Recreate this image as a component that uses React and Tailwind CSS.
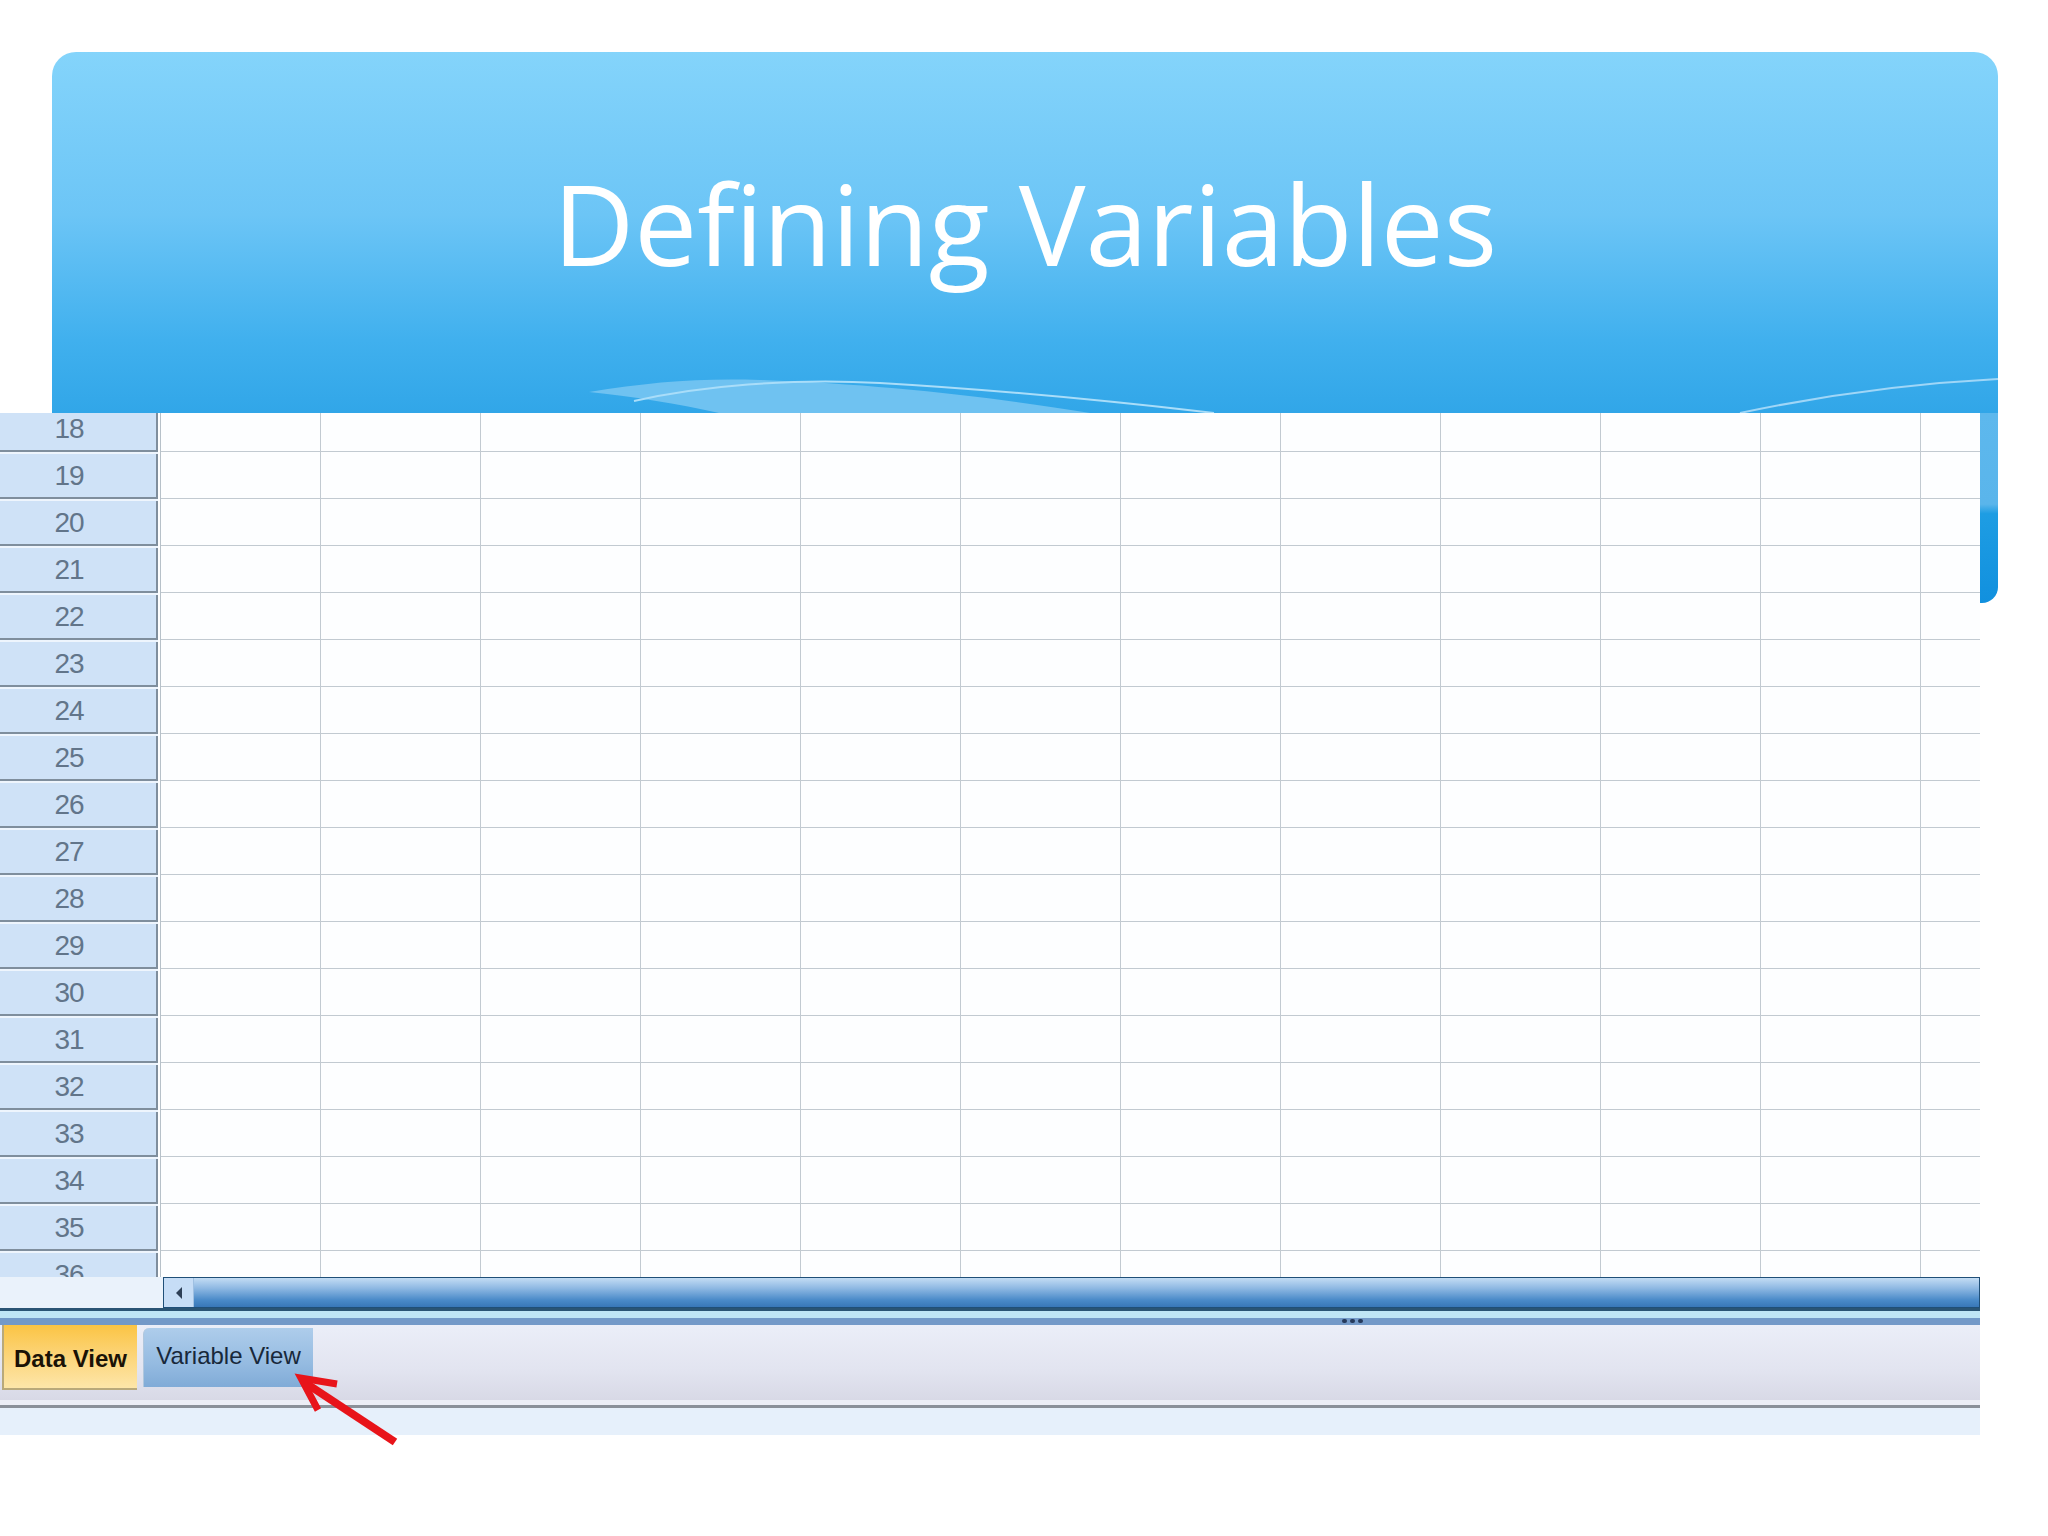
import React from "react";

const rows = Array.from({ length: 19 }, (_, i) => 18 + i);
const cols = Array.from({ length: 12 }, (_, i) => i);

function GridRow({ n }) {
  return (
    <div className="flex h-[47px] shrink-0">
      <div className="w-[160px] shrink-0 flex">
        <div className="w-[158px] h-full flex flex-col">
          <div className="h-[2px] bg-[#eef5fd]" />
          <div className="flex-1 bg-[#cfe2f7] border-r-2 border-b-2 border-[#7f8e9d] flex items-center justify-center pr-[18px]">
            <span className="text-[28px] leading-none text-[#62758a] font-['Liberation_Sans',Arial,sans-serif] tracking-[-1px]">
              {n}
            </span>
          </div>
        </div>
      </div>
      <div className="flex-1 flex overflow-hidden border-l border-[#b7c1c9] bg-[#fdfeff]">
        {cols.map((c) => (
          <div key={c} className="w-[160px] shrink-0 h-full border-r border-b border-[#c2cad1]" />
        ))}
      </div>
    </div>
  );
}

export default function App() {
  return (
    <div className="relative w-[2048px] h-[1536px] bg-white overflow-hidden">
      {/* banner */}
      <div className="relative ml-[52px] mt-[52px] w-[1946px] h-[361px] rounded-t-[24px] bg-[linear-gradient(180deg,#84d4fb_0%,#6cc5f6_45%,#40b0ee_80%,#31a6e8_100%)]">
        <h1 className="pt-[115px] text-center text-white text-[112px] leading-[112px] font-['Open_Sans','Noto_Sans',sans-serif] font-normal">
          Defining Variables
        </h1>
        <svg className="absolute left-0 top-0" width="1946" height="361" viewBox="52 52 1946 361">
          <path d="M589 392 C 650 382, 700 378, 760 380 C 880 384, 1000 398, 1090 413 L 719 413 C 680 404, 630 396, 589 392 Z" fill="#6fc2f1" />
          <path d="M634 401 C 700 386, 790 378, 880 383 C 1000 390, 1120 402, 1214 413" stroke="#a9ddf9" strokeWidth="2" fill="none" />
          <path d="M1740 413 C 1820 396, 1900 384, 1998 379" stroke="#9fd6f7" strokeWidth="2" fill="none" />
        </svg>
      </div>

      {/* screenshot + right strip */}
      <div className="flex items-start">
        <div className="w-[1980px] shrink-0 flex flex-col">
          {/* grid */}
          <div className="h-[864px] flex flex-col overflow-hidden">
            {rows.map((n, i) => {
              if (i === 0)
                return (
                  <div key={n} className="h-[39px] overflow-hidden flex flex-col justify-end shrink-0">
                    <GridRow n={n} />
                  </div>
                );
              if (n === 36)
                return (
                  <div key={n} className="h-[26px] overflow-hidden shrink-0 flex flex-col">
                    <GridRow n={n} />
                  </div>
                );
              return <GridRow key={n} n={n} />;
            })}
          </div>

          {/* horizontal scrollbar */}
          <div className="h-[31px] flex">
            <div className="w-[163px] shrink-0 bg-[#eaf2fb]" />
            <div className="flex-1 flex border border-[#1f4f78] bg-[linear-gradient(180deg,#c3dcf4_0%,#8fb9e3_35%,#4b8bc9_75%,#3877b8_100%)]">
              <div className="w-[30px] shrink-0 bg-[#c6ddf6] border-r border-[#9fc0e2] flex items-center justify-center">
                <svg width="10" height="14" viewBox="0 0 10 14">
                  <path d="M8 1 L2 7 L8 13 Z" fill="#2d3f56" />
                </svg>
              </div>
              <div className="flex-1" />
            </div>
          </div>
          <div className="h-[3px] bg-[#2a5474]" />
          <div className="h-[7px] bg-[#bfe5f5]" />
          <div className="h-[7px] bg-[#7399c8] relative">
            <div className="absolute left-[1342px] top-[1px] flex gap-[3px]">
              <div className="w-[5px] h-[4px] rounded-full bg-[#263a5c]" />
              <div className="w-[5px] h-[4px] rounded-full bg-[#263a5c]" />
              <div className="w-[5px] h-[4px] rounded-full bg-[#263a5c]" />
            </div>
          </div>

          {/* tab strip */}
          <div className="h-[75px] flex items-start bg-[linear-gradient(180deg,#ebeef8_0%,#e2e4f0_60%,#d8d9e6_100%)]">
            <div className="ml-[2px] w-[135px] h-[65px] flex items-center justify-center border-l-2 border-b-2 border-[#b9a97a] bg-[linear-gradient(180deg,#fbc444_0%,#fcd57a_50%,#fde6a9_100%)]">
              <span className="text-[24px] font-bold text-[#1a1206] font-['Liberation_Sans',Arial,sans-serif] mt-[4px]">
                Data View
              </span>
            </div>
            <div className="ml-[6px] mt-[3px] w-[170px] h-[59px] flex items-center justify-center rounded-tl-[6px] border-l border-[#b0c7dd] bg-[linear-gradient(180deg,#aecdeb_0%,#95bbe1_60%,#80abd7_100%)]">
              <span className="text-[24px] text-[#18283a] font-['Liberation_Sans',Arial,sans-serif] -mt-[4px]">
                Variable View
              </span>
            </div>
          </div>
          <div className="h-[5px] bg-[#eceef6]" />
          <div className="h-[3px] bg-[#8a9099]" />
          <div className="h-[27px] bg-[#e6f0fb]" />
        </div>
        <div className="w-[18px] h-[190px] shrink-0 rounded-br-[16px] bg-[linear-gradient(180deg,#5db8ed_0%,#5ab5eb_48%,#1e9de3_53%,#1190de_100%)]" />
      </div>

      {/* red arrow */}
      <svg className="absolute left-0 top-0 pointer-events-none" width="2048" height="1536">
        <path d="M395 1442 L304 1382" stroke="#e8141a" strokeWidth="8" fill="none" />
        <path d="M337 1384 L301 1378 L318 1410" stroke="#e8141a" strokeWidth="7" fill="none" strokeLinejoin="miter" />
      </svg>
    </div>
  );
}
